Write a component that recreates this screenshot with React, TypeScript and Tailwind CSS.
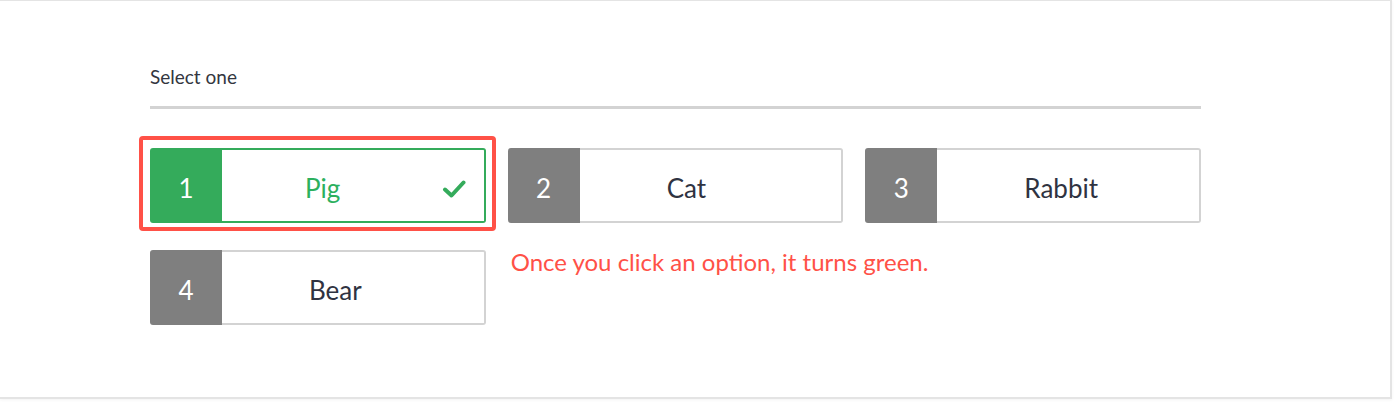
import React from 'react';

interface Option {
  id: number;
  label: string;
}

const options: Option[] = [
  { id: 1, label: 'Pig' },
  { id: 2, label: 'Cat' },
  { id: 3, label: 'Rabbit' },
  { id: 4, label: 'Bear' },
];

const CheckMark: React.FC = () => (
  <svg width="24" height="20" viewBox="0 0 24 20" fill="none">
    <path d="M3 10.5 L9.5 16.5 L21.5 3.5" stroke="#34ab5b" strokeWidth="4" strokeLinecap="round" strokeLinejoin="round" />
  </svg>
);

const OptionCard: React.FC<{ option: Option; selected: boolean }> = ({ option, selected }) => (
  <div className="flex h-[75px]">
    <div
      className={`w-[72px] pt-[6px] rounded-l-[3px] flex items-center justify-center text-[26px] text-white ${
        selected ? 'bg-[#34ab5b]' : 'bg-[#7f7f7f]'
      }`}
    >
      {option.id}
    </div>
    <div
      className={`flex-1 flex items-center pt-[6px] pr-[18px] bg-white rounded-r-[3px] border-2 border-l-0 ${
        selected ? 'border-[#34ab5b] pl-[83px]' : 'border-[#d3d3d3] pl-[87px]'
      }`}
    >
      <span className={`flex-1 text-[26px] ${selected ? 'text-[#2cb05e]' : 'text-[#2f3341]'}`}>
        {option.label}
      </span>
      {selected && <CheckMark />}
    </div>
  </div>
);

export default function App() {
  return (
    <div className="w-[1398px] h-[408px] bg-white font-['Lato','Noto_Sans',sans-serif]">
      <div className="w-[1392px] h-[399px] border-t-[1.5px] border-r-2 border-b-2 border-[#e4e4e4] shadow-[0_1px_3px_rgba(0,0,0,0.05)] pl-[150px] pt-[64px]">
        <div className="w-[1051px]">
          <div className="text-[19px] leading-[24px] text-[#333640]">Select one</div>
          <div className="h-[3px] bg-[#d3d3d3] mt-[17px]" />

          <div className="grid grid-cols-3 gap-x-[22px] gap-y-[27px] mt-[39px]">
            {options.slice(0, 3).map((o, i) => (
              <div key={o.id} className="relative">
                <OptionCard option={o} selected={i === 0} />
                {i === 0 && (
                  <div className="absolute -left-[11px] -top-[12px] w-[357px] h-[95px] border-4 border-[#ff5147] rounded-[4px] pointer-events-none" />
                )}
              </div>
            ))}
            <OptionCard option={options[3]} selected={false} />
            <div className="ml-[3px] text-[24px] leading-[24px] text-[#ff5147] whitespace-nowrap">
              Once you click an option, it turns green.
            </div>
          </div>
        </div>
      </div>
    </div>
  );
}
